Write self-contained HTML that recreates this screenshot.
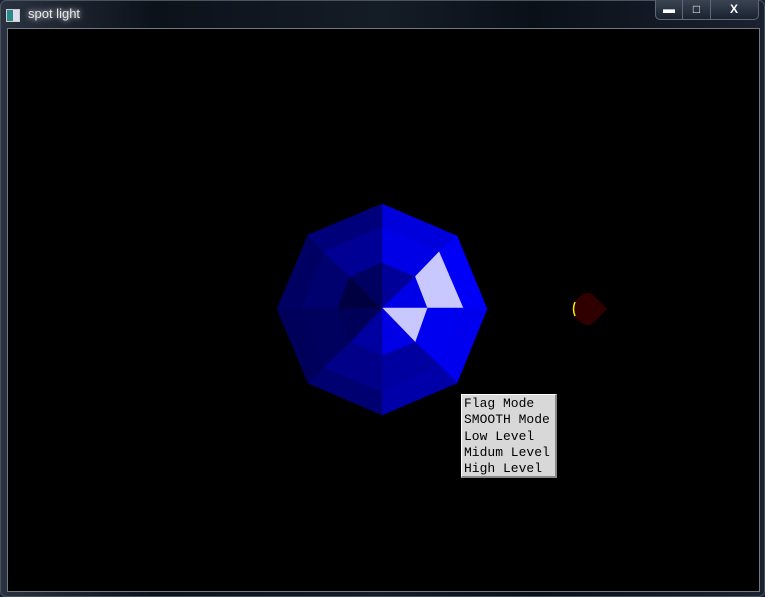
<!DOCTYPE html>
<html><head><style>
body{margin:0;width:765px;height:597px;overflow:hidden;background:#1a2230;font-family:"Liberation Sans",sans-serif}
.frame{position:absolute;left:0;top:0;width:763px;height:595px;border:1px solid #4a5260;border-radius:6px;background:linear-gradient(90deg,#2a3240 0%,#0c121a 20%,#141c26 50%,#0a1018 70%,#1a2230 100%)}
.title{position:absolute;left:28px;top:6px;color:#e8e8e8;font-size:13px;text-shadow:0 0 6px #fff}
.icon{position:absolute;left:6px;top:9px;width:12px;height:11px;background:linear-gradient(90deg,#2a8a8a 50%,#dde 50%);border:1px solid #ccc}
.client{position:absolute;left:7px;top:28px;width:751px;height:562px;background:#000;border:1px solid #707880}
.btns{position:absolute;left:655px;top:0;width:102px;height:19px;border:1px solid #606878;border-top:none;border-radius:0 0 5px 5px;background:linear-gradient(#3a4452,#1a2230)}
.btns div{position:absolute;top:0;height:19px;border-right:1px solid #606878;color:#fff;font-size:12px;font-weight:bold;text-align:center;line-height:19px}
.menu{position:absolute;left:461px;top:394px;width:96px;height:84px;background:#d8d8d8;border-right:2px solid #888;border-bottom:2px solid #888;border-top:1px solid #fff;border-left:1px solid #fff;font-family:"Liberation Mono",monospace;font-size:13px;line-height:16.3px;color:#000;padding-left:2px;box-sizing:border-box;padding-top:1px;white-space:pre}
</style></head><body>
<div class="frame"></div>
<div class="icon"></div>
<div class="title">spot light</div>
<div class="btns"><div style="left:0;width:26px">&#9644;</div><div style="left:27px;width:27px">&#9633;</div><div style="left:55px;width:46px;border:none">X</div></div>
<div class="client"></div>
<svg style="position:absolute;left:0;top:0" width="765" height="597">
<g stroke-width="0.6">
<polygon points="382,204 457,236 439,252 382,227" fill="#0000dd" stroke="#0000dd"/>
<polygon points="457,236 487,309 463,308 439,252" fill="#0000f8" stroke="#0000f8"/>
<polygon points="487,309 457,383 439,365 463,308" fill="#0000ee" stroke="#0000ee"/>
<polygon points="457,383 382,415 382,392 439,365" fill="#0000a8" stroke="#0000a8"/>
<polygon points="382,415 308,383 323,367 382,392" fill="#000070" stroke="#000070"/>
<polygon points="308,383 277,309 302,308 323,367" fill="#00005a" stroke="#00005a"/>
<polygon points="277,309 308,235 324,252 302,308" fill="#000062" stroke="#000062"/>
<polygon points="308,235 382,204 382,227 324,252" fill="#00007a" stroke="#00007a"/>
<polygon points="382,227 439,252 415,277 382,263" fill="#0000e6" stroke="#0000e6"/>
<polygon points="439,252 463,308 427,308 415,277" fill="#c8c8ff" stroke="#c8c8ff"/>
<polygon points="463,308 439,365 415,342 427,308" fill="#0000f0" stroke="#0000f0"/>
<polygon points="439,365 382,392 382,355 415,342" fill="#0000a0" stroke="#0000a0"/>
<polygon points="382,392 323,367 350,342 382,355" fill="#000088" stroke="#000088"/>
<polygon points="323,367 302,308 338,308 350,342" fill="#00005e" stroke="#00005e"/>
<polygon points="302,308 324,252 350,277 338,308" fill="#00006e" stroke="#00006e"/>
<polygon points="324,252 382,227 382,263 350,277" fill="#000094" stroke="#000094"/>
<polygon points="382,308 382,263 415,277" fill="#000098" stroke="#000098"/>
<polygon points="382,308 415,277 427,308" fill="#0000e8" stroke="#0000e8"/>
<polygon points="382,308 427,308 415,342" fill="#c8c8ff" stroke="#c8c8ff"/>
<polygon points="382,308 415,342 382,355" fill="#0000e6" stroke="#0000e6"/>
<polygon points="382,308 382,355 350,342" fill="#0000a0" stroke="#0000a0"/>
<polygon points="382,308 350,342 338,308" fill="#000058" stroke="#000058"/>
<polygon points="382,308 338,308 350,277" fill="#000040" stroke="#000040"/>
<polygon points="382,308 350,277 382,263" fill="#000060" stroke="#000060"/>
</g>
<path d="M576,300 Q586,290 592,294 L607,309 L592,324 Q586,328 576,318 Q571,309 576,300Z" fill="#300000"/>
<path d="M575,302 Q572,309 575,316" stroke="#ffee00" stroke-width="1.5" fill="none"/>
</svg>
<div class="menu">Flag Mode
SMOOTH Mode
Low Level
Midum Level
High Level</div>
</body></html>
